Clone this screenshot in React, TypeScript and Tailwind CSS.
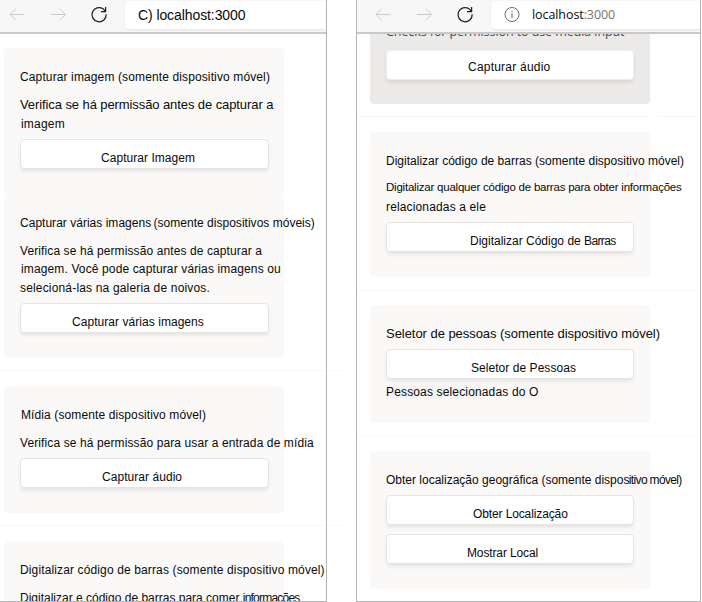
import type { ReactNode } from 'react';

function Line({ className = '', children }: { className?: string; children: ReactNode }) {
  return <div className={`h-4 whitespace-nowrap leading-4 ${className}`}>{children}</div>;
}

function Card({ className = '', children }: { className?: string; children: ReactNode }) {
  return (
    <section className={`w-[280px] shrink-0 rounded bg-[#faf9f8] px-4 pt-[21px] ${className}`}>
      {children}
    </section>
  );
}

function Button({ className = '', children }: { className?: string; children: ReactNode }) {
  return (
    <button
      className={`flex h-[30px] items-start rounded-[4px] border bg-white text-left leading-4 whitespace-nowrap shadow-[0_3px_4px_-1px_rgba(0,0,0,0.1)] ${className}`}
    >
      <span>{children}</span>
    </button>
  );
}

function Divider({ className = '' }: { className?: string }) {
  return <hr className={`h-px w-full shrink-0 border-0 bg-[#f9f8f8] ${className}`} />;
}

function Toolbar({ className = '', children }: { className?: string; children: ReactNode }) {
  return (
    <header
      className={`flex h-[34px] shrink-0 items-start border-b-2 border-b-[#c9c9c9] bg-[#f7f7f7] ${className}`}
    >
      <svg className="h-[30px] w-[118px] shrink-0" viewBox="0 0 118 30" fill="none">
        <g stroke="#cbcbcb" strokeWidth="1">
          <path d="M24.5 14.5H10M16 8.5L10 14.5L16 20.5" />
          <path d="M51 14.5H65.5M59.5 8.5L65.5 14.5L59.5 20.5" />
        </g>
        <path
          d="M106.2 14.3A7.1 7.1 0 1 1 103 8.7L105.4 11.3M105.6 7V11.5H101"
          stroke="#1f1f1f"
          strokeWidth="1.25"
        />
      </svg>
      <div className="mt-px ml-[7px] flex h-[28px] flex-1 rounded-l-[4px] bg-white shadow-[0_1px_2px_rgba(0,0,0,0.08)]">
        {children}
      </div>
    </header>
  );
}

export default function App() {
  return (
    <main className="flex h-[602px] w-[702px] overflow-hidden bg-white font-['Liberation_Sans',Arial,sans-serif] text-[12px] text-[#0a0a0a]">
      <div className="flex w-[327px] shrink-0 flex-col overflow-hidden border-r border-b border-[#b5b5b5]">
        <Toolbar>
          <Line className="mt-[6px] ml-[13px] text-[14px] tracking-[-0.09px]">C) localhost:3000</Line>
        </Toolbar>
        <div className="flex min-h-0 flex-1 flex-col pt-[14px]">
          <Card className="ml-1 h-[146px]">
            <Line className="tracking-[0.122px]">Capturar imagem (somente dispositivo móvel)</Line>
            <Line className="mt-3 text-[13px] tracking-[-0.09px]">Verifica se há permissão antes de capturar a</Line>
            <Line className="mt-[3px] ml-px tracking-[0.2px]">imagem</Line>
            <Button className="mt-[7px] w-[249px] border-[#e5e4e3] pt-[10px] pl-[80px] tracking-[0.04px]">
              Capturar Imagem
            </Button>
          </Card>
          <Card className="ml-1 h-[164px]">
            <Line className="tracking-[0.02px]">
              Capturar várias imagens<span className="ml-[-1px]"> (somente dispositivos móveis)</span>
            </Line>
            <Line className="mt-3 tracking-[0.103px]">Verifica se há permissão antes de capturar a</Line>
            <Line className="mt-[2px] ml-px tracking-[0.13px]">imagem. Você pode capturar várias imagens ou</Line>
            <Line className="mt-[3px] tracking-[0.168px]">selecioná-las na galeria de noivos.</Line>
            <Button className="mt-[7px] w-[249px] border-[#e5e4e3] pt-[10px] pl-[51px] tracking-[0.05px]">
              Capturar várias imagens
            </Button>
          </Card>
          <Divider className="mt-3" />
          <Card className="mt-[15px] ml-1 h-[127px]">
            <Line className="ml-px tracking-[0.109px]">Mídia (somente dispositivo móvel)</Line>
            <Line className="mt-3 tracking-[0.105px]">Verifica se há permissão para usar a entrada de mídia</Line>
            <Button className="mt-[7px] w-[249px] border-[#e5e4e3] pt-[10px] pl-[81px] tracking-[0.05px]">
              Capturar áudio
            </Button>
          </Card>
          <Divider className="mt-3" />
          <Card className="mt-[15px] ml-1 h-[127px]">
            <Line className="tracking-[0.13px]">Digitalizar código de barras (somente dispositivo móvel)</Line>
            <Line className="mt-3">
              Digitalizar e código de barras para comer <span className="tracking-[-0.78px]">informações</span>
            </Line>
          </Card>
        </div>
      </div>

      <div className="flex w-[29px] shrink-0 flex-col pt-[370px] pl-1">
        <div className="h-px w-[11px] bg-[#f9f8f8]" />
        <div className="mt-[154px] h-px w-[11px] bg-[#f9f8f8]" />
      </div>

      <div className="flex w-[345px] shrink-0 flex-col overflow-hidden border-x border-b border-[#b5b5b5]">
        <Toolbar className="pl-[9px]">
          <svg className="mt-[5px] ml-[13px] h-4 w-4 shrink-0" viewBox="0 0 16 16" fill="none" stroke="#6b6b6b">
            <circle cx="8" cy="8.5" r="7" />
            <path d="M8 7.3V12M8 4.8V6" strokeWidth="1.1" />
          </svg>
          <Line className="mt-[6px] ml-[12px] font-['Open_Sans','Noto_Sans',sans-serif] text-[12.5px] tracking-[-0.08px]">
            localhost<span className="text-[#767676]">:3000</span>
          </Line>
        </Toolbar>
        <div className="flex min-h-0 flex-1 flex-col overflow-hidden">
          <section className="ml-[13px] h-[70px] w-[280px] shrink-0 overflow-hidden rounded-b bg-[#ebeae9] px-4">
            <Line className="-mt-[10px] font-['Open_Sans','Noto_Sans',sans-serif] text-[12.5px] tracking-[-0.08px] text-[#484644]">
              Checks for permission to use media input
            </Line>
            <Button className="mt-[9.5px] w-full border-[#f0efee] pt-[8px] pl-[81px] tracking-[0.22px]">
              Capturar áudio
            </Button>
          </section>
          <div className="mt-3 flex shrink-0 gap-[7px]">
            <div className="h-px w-[293px] bg-[#f7f6f6]" />
            <div className="h-px flex-1 bg-[#f7f6f6]" />
          </div>
          <Card className="mt-[15px] ml-[13px] h-[145px]">
            <Line className="tracking-[0.01px]">Digitalizar código de barras (somente dispositivo móvel)</Line>
            <Line className="mt-[10px] text-[11.5px] tracking-[-0.22px]">
              Digitalizar qualquer código de barras para obter informações
            </Line>
            <Line className="mt-1 tracking-[0.144px]">relacionadas a ele</Line>
            <Button className="mt-[7px] w-full border-[#e5e4e3] pt-[10px] pl-[83px]">
              Digitalizar Código de <span className="tracking-[-0.65px]">Barras</span>
            </Button>
          </Card>
          <Divider className="mt-[13px]" />
          <Card className="mt-[14px] ml-[13px] h-[118px]">
            <Line className="text-[13px] tracking-[-0.044px]">Seletor de pessoas (somente dispositivo móvel)</Line>
            <Button className="mt-[7px] w-full border-[#e5e4e3] pt-[10px] pl-[84px] tracking-[0.05px]">
              Seletor de Pessoas
            </Button>
            <Line className="mt-[5px] tracking-[0.15px]">
              <span className="bg-[#f5f4f3]">Pessoas selecion</span>adas do O
            </Line>
          </Card>
          <Divider className="mt-3" />
          <Card className="mt-[15px] ml-[13px] h-[138px]">
            <Line>
              Obter localização geográfica (somente dispo<span className="tracking-[-0.65px]">sitivo móvel)</span>
            </Line>
            <Button className="mt-[7px] w-full border-[#e5e4e3] pt-[10px] pl-[86px] tracking-[-0.12px]">
              Obter Localização
            </Button>
            <Button className="mt-[9px] w-full border-[#e5e4e3] pt-[10px] pl-[80px] tracking-[-0.131px]">
              Mostrar Local
            </Button>
          </Card>
        </div>
      </div>
    </main>
  );
}
